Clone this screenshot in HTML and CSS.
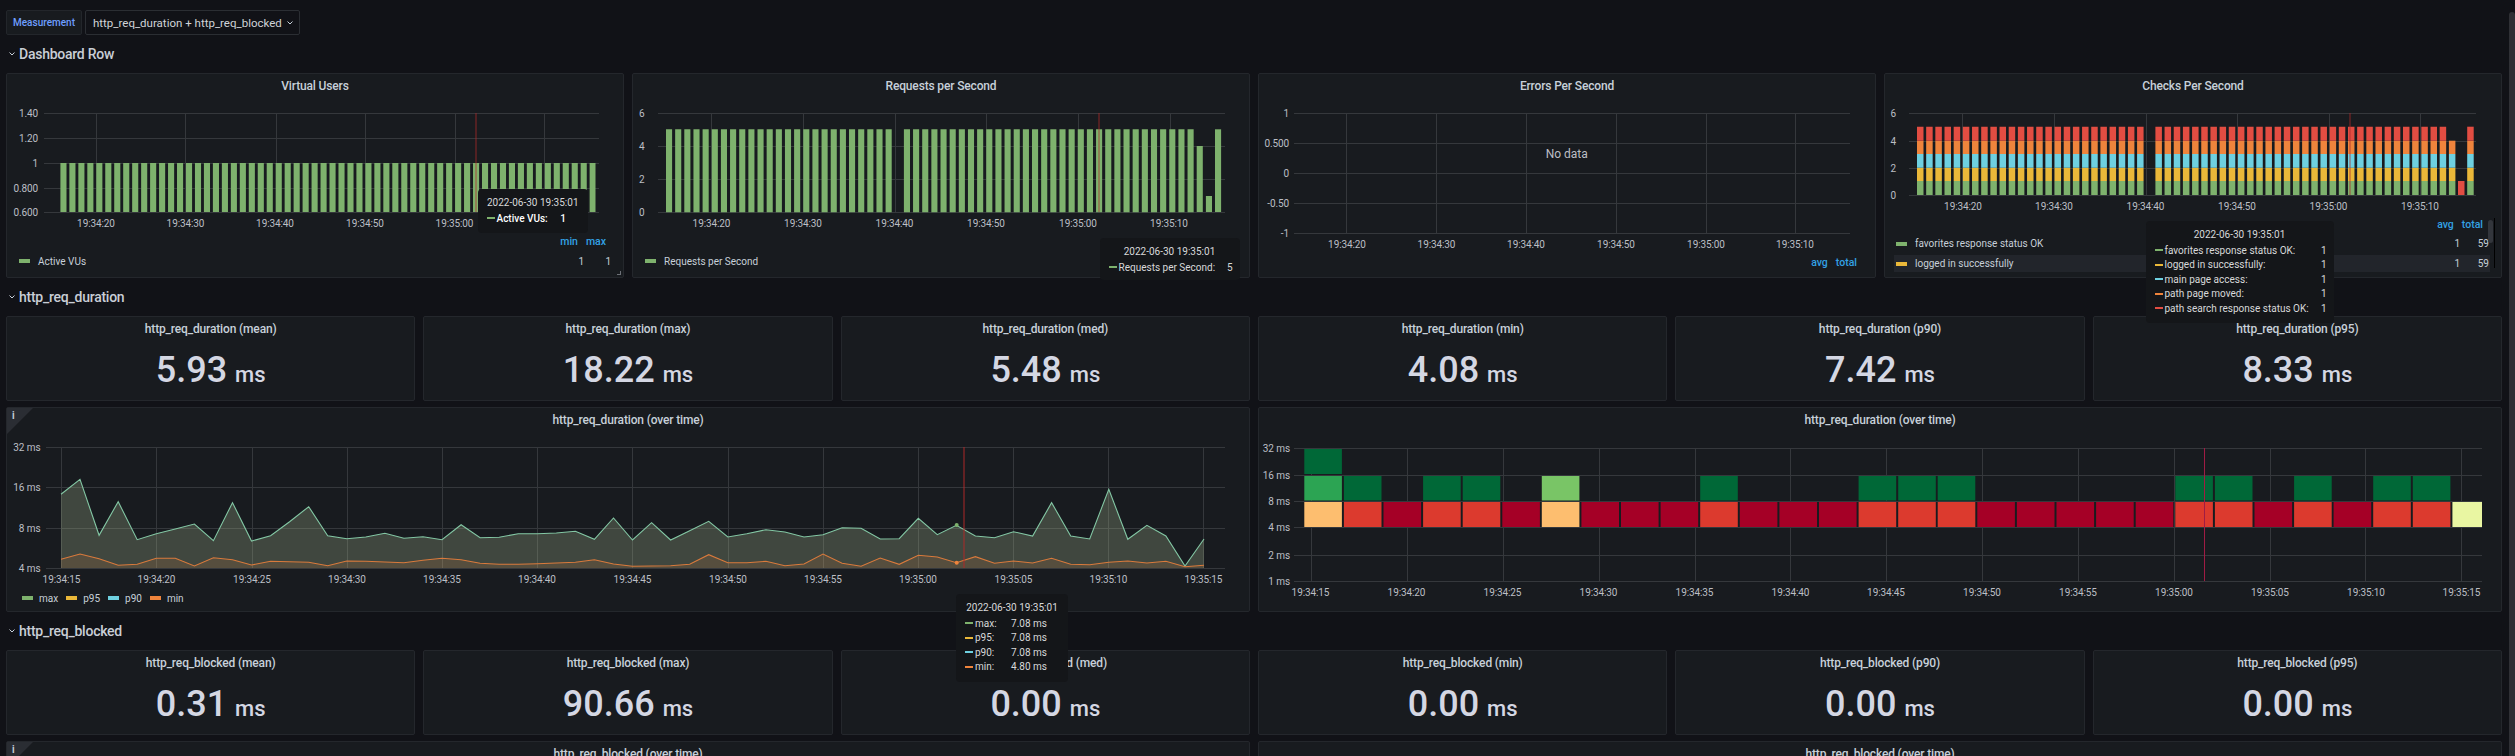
FILE: index.html
```html
<!DOCTYPE html>
<html lang="en">
<head>
<meta charset="utf-8">
<title>k6 dashboard</title>
<link rel="stylesheet" href="styles.css">
</head>
<body>
<div class="scrollbar"></div>
<main class="page">
  <div class="toolbar">
    <span class="var-label">Measurement</span>
    <span class="var-value">http_req_duration + http_req_blocked
      <svg class="chev" viewBox="0 0 8 8"><path d="M1.5 2.5 4 5l2.500-2.500"/></svg>
    </span>
  </div>

  <h2 class="row-title"><svg class="chev" viewBox="0 0 8 8"><path d="M1.500 2.500 4 5l2.500-2.500"/></svg>Dashboard Row</h2>
  <section class="grid four">
    <article class="panel handle">
      <h3 class="p-title">Virtual Users</h3>
      <svg class="chart h132" viewBox="7 100 616 132">
        <path class="grid-l" d="M44 113.500H599M44 138.500H599M44 163.500H599M44 188.500H599M44 212.500H599M96.500 113V212M185.500 113V212M276.500 113V212M365.500 113V212M455.500 113V212M544.500 113V212"/>
        <line class="bars" x1="60.400" x2="595.500" y1="187.500" y2="187.500" stroke-width="49" stroke-dasharray="6.100 2.870"/>
        <line class="cursor" x1="476" x2="476" y1="113" y2="212"/>
        <g class="ay"><text x="38" y="113">1.40</text><text x="38" y="138">1.20</text><text x="38" y="163">1</text><text x="38" y="188">0.800</text><text x="38" y="212">0.600</text></g>
        <g class="ax"><text x="96" y="223">19:34:20</text><text x="185.500" y="223">19:34:30</text><text x="275" y="223">19:34:40</text><text x="365" y="223">19:34:50</text><text x="454.500" y="223">19:35:00</text></g>
      </svg>
      <div class="legend l45">
        <div class="lg-head"><span>min</span><span>max</span></div>
        <div class="lg-row"><i class="sw green"></i><span class="lg-name">Active VUs</span><span class="lg-val">1</span><span class="lg-val">1</span></div>
      </div>
      <div class="tip t1">
        <div class="tip-date">2022-06-30 19:35:01</div>
        <div class="tip-row strong"><i class="tsw green"></i><span>Active VUs:</span><b>1</b></div>
      </div>
    </article>

    <article class="panel">
      <h3 class="p-title">Requests per Second</h3>
      <svg class="chart h132" viewBox="633 100 616 132">
        <path class="grid-l" d="M658 113.500H1225M658 146.500H1225M658 179.500H1225M658 212.500H1225M711.500 113V212M803.500 113V212M895.500 113V212M986.500 113V212M1078.500 113V212M1170.500 113V212"/>
        <g class="bars dash915" stroke-width="83">
          <line x1="666" x2="891.700" y1="170.800" y2="170.800"/>
          <line x1="903.900" x2="1193.700" y1="170.800" y2="170.800"/>
        </g>
        <rect class="bar-fill" x="1196.700" y="146" width="6.100" height="66"/>
        <rect class="bar-fill" x="1205.900" y="196" width="6.100" height="16"/>
        <rect class="bar-fill" x="1215" y="129.300" width="6.100" height="82.700"/>
        <line class="cursor" x1="1099" x2="1099" y1="113" y2="212"/>
        <g class="ay"><text x="644.500" y="113">6</text><text x="644.500" y="146">4</text><text x="644.500" y="179">2</text><text x="644.500" y="212">0</text></g>
        <g class="ax"><text x="711.500" y="223">19:34:20</text><text x="803" y="223">19:34:30</text><text x="894.500" y="223">19:34:40</text><text x="986" y="223">19:34:50</text><text x="1078" y="223">19:35:00</text><text x="1169" y="223">19:35:10</text></g>
      </svg>
      <div class="legend l45">
        <div class="lg-row"><i class="sw green"></i><span class="lg-name">Requests per Second</span></div>
      </div>
      <div class="tip t2">
        <div class="tip-date">2022-06-30 19:35:01</div>
        <div class="tip-row"><i class="tsw green"></i><span>Requests per Second:</span><b>5</b></div>
      </div>
    </article>

    <article class="panel">
      <h3 class="p-title">Errors Per Second</h3>
      <svg class="chart h152" viewBox="1259 100 616 152">
        <path class="grid-l" d="M1294 113.500H1850M1294 143.500H1850M1294 173.500H1850M1294 203.500H1850M1294 233.500H1850M1346.500 113V233M1436.500 113V233M1526.500 113V233M1616.500 113V233M1706.500 113V233M1795.500 113V233"/>
        <text class="nodata" x="1566.700" y="154">No data</text>
        <g class="ay"><text x="1289" y="113">1</text><text x="1289" y="143">0.500</text><text x="1289" y="173">0</text><text x="1289" y="203">-0.50</text><text x="1289" y="233">-1</text></g>
        <g class="ax"><text x="1347" y="244">19:34:20</text><text x="1436.500" y="244">19:34:30</text><text x="1526" y="244">19:34:40</text><text x="1616" y="244">19:34:50</text><text x="1706" y="244">19:35:00</text><text x="1795" y="244">19:35:10</text></g>
      </svg>
      <div class="legend l25">
        <div class="lg-head wide"><span>avg</span><span>total</span></div>
      </div>
    </article>

    <article class="panel">
      <h3 class="p-title">Checks Per Second</h3>
      <svg class="chart h115" viewBox="1885 100 616 115">
        <path class="grid-l" d="M1909 113.500H2476M1909 141.500H2476M1909 168.500H2476M1909 195.500H2476M1962.500 113V195M2054.500 113V195M2146.500 113V195M2237.500 113V195M2329.500 113V195M2420.500 113V195"/>
        <g class="dash917" stroke-width="14">
          <g class="s-green"><line x1="1917" x2="2143.600" y1="188" y2="188"/><line x1="2155.400" x2="2446.200" y1="188" y2="188"/></g>
          <g class="s-yellow" stroke-width="13.300"><line x1="1917" x2="2143.600" y1="174.300" y2="174.300"/><line x1="2155.400" x2="2446.200" y1="174.300" y2="174.300"/></g>
          <g class="s-blue" stroke-width="13.700"><line x1="1917" x2="2143.600" y1="160.800" y2="160.800"/><line x1="2155.400" x2="2446.200" y1="160.800" y2="160.800"/></g>
          <g class="s-orange" stroke-width="13.300"><line x1="1917" x2="2143.600" y1="147.300" y2="147.300"/><line x1="2155.400" x2="2446.200" y1="147.300" y2="147.300"/></g>
          <g class="s-red"><line x1="1917" x2="2143.600" y1="133.700" y2="133.700"/><line x1="2155.400" x2="2446.200" y1="133.700" y2="133.700"/></g>
        </g>
        <rect class="f-green" x="2448.900" y="181" width="6.500" height="14"/>
        <rect class="f-yellow" x="2448.900" y="167.700" width="6.500" height="13.300"/>
        <rect class="f-blue" x="2448.900" y="154" width="6.500" height="13.700"/>
        <rect class="f-orange" x="2448.900" y="140.700" width="6.500" height="13.300"/>
        <rect class="f-red" x="2458" y="181" width="6.500" height="14"/>
        <rect class="f-green" x="2467.200" y="181" width="6.500" height="14"/>
        <rect class="f-yellow" x="2467.200" y="167.700" width="6.500" height="13.300"/>
        <rect class="f-blue" x="2467.200" y="154" width="6.500" height="13.700"/>
        <rect class="f-orange" x="2467.200" y="140.700" width="6.500" height="13.300"/>
        <rect class="f-red" x="2467.200" y="126.700" width="6.500" height="14"/>
        <line class="cursor" x1="2350" x2="2350" y1="113" y2="195"/>
        <g class="ay"><text x="1896" y="113">6</text><text x="1896" y="141">4</text><text x="1896" y="168">2</text><text x="1896" y="195">0</text></g>
        <g class="ax"><text x="1963" y="206">19:34:20</text><text x="2054" y="206">19:34:30</text><text x="2145.500" y="206">19:34:40</text><text x="2237" y="206">19:34:50</text><text x="2328.500" y="206">19:35:00</text><text x="2420" y="206">19:35:10</text></g>
      </svg>
      <div class="legend-table">
        <div class="lg-head table"><span>avg</span><span>total</span></div>
        <div class="lg-row t-row"><i class="sw green"></i><span class="lg-name">favorites response status OK</span><span class="lg-val">1</span><span class="lg-val w29">59</span></div>
        <div class="lg-row t-row hl"><i class="sw yellow"></i><span class="lg-name">logged in successfully</span><span class="lg-val">1</span><span class="lg-val w29">59</span></div>
        <div class="lg-track"></div>
        <div class="lg-thumb"></div>
      </div>
      <div class="tip t4">
        <div class="tip-date">2022-06-30 19:35:01</div>
        <div class="tip-row"><i class="tsw green"></i><span>favorites response status OK:</span><b>1</b></div>
        <div class="tip-row"><i class="tsw yellow"></i><span>logged in successfully:</span><b>1</b></div>
        <div class="tip-row"><i class="tsw blue"></i><span>main page access:</span><b>1</b></div>
        <div class="tip-row"><i class="tsw orange"></i><span>path page moved:</span><b>1</b></div>
        <div class="tip-row"><i class="tsw red"></i><span>path search response status OK:</span><b>1</b></div>
      </div>
    </article>
  </section>

  <h2 class="row-title"><svg class="chev" viewBox="0 0 8 8"><path d="M1.500 2.500 4 5l2.500-2.500"/></svg>http_req_duration</h2>
  <section class="grid six">
    <article class="stat"><h3 class="p-title">http_req_duration (mean)</h3><div class="value">5.93<small>ms</small></div></article>
    <article class="stat"><h3 class="p-title">http_req_duration (max)</h3><div class="value">18.22<small>ms</small></div></article>
    <article class="stat"><h3 class="p-title">http_req_duration (med)</h3><div class="value">5.48<small>ms</small></div></article>
    <article class="stat"><h3 class="p-title">http_req_duration (min)</h3><div class="value">4.08<small>ms</small></div></article>
    <article class="stat"><h3 class="p-title">http_req_duration (p90)</h3><div class="value">7.42<small>ms</small></div></article>
    <article class="stat"><h3 class="p-title">http_req_duration (p95)</h3><div class="value">8.33<small>ms</small></div></article>
  </section>
  <section class="grid two">
    <article class="panel">
      <span class="info"></span><span class="info-i">i</span>
      <h3 class="p-title">http_req_duration (over time)</h3>
      <svg class="chart h155" viewBox="7 434 1242 155">
        <path class="grid-l" d="M46 447.500H1225M46 487.500H1225M46 528.500H1225M46 568.500H1225M61.500 447V568M156.500 447V568M252.500 447V568M347.500 447V568M442.500 447V568M537.500 447V568M632.500 447V568M728.500 447V568M823.500 447V568M918.500 447V568M1013.500 447V568M1108.500 447V568M1203.500 447V568"/>
        <polygon class="area-max" points="61,568 61,494.300 80,479.300 99.100,535.300 118.200,501.700 137.200,539.700 156.300,533.700 175.300,529 194.400,524 213.400,540.700 232.500,502.700 251.500,541 270.600,535.700 289.600,521.700 308.700,506.700 327.700,535.700 346.800,538.700 365.800,537 384.900,533.300 403.900,538.300 423,536.700 442,539.700 461.100,524.700 480.100,537.700 499.200,537.300 518.200,533.700 537.300,533.700 556.300,533 575.400,531.300 594.400,539.300 613.500,518 632.500,540 651.600,522.700 670.600,540 689.700,530.700 708.700,521.300 727.800,537 746.800,533.700 765.900,529.700 784.900,532 804,537 823,534.700 842.100,527.700 861.100,528.300 880.200,539 899.200,538.700 918.300,518.300 937.300,534.700 956.400,525.300 975.400,536 994.500,537.700 1013.500,531.700 1032.600,536 1051.600,502.700 1070.700,536 1089.700,539 1108.800,489.300 1127.800,539.300 1146.900,525.300 1165.900,536 1185,566 1204,539 1204,568"/>
        <polygon class="area-min" points="61,568 61,559.300 80,554 99.100,558.700 118.200,565.300 137.200,564.300 156.300,558.300 175.300,558.300 194.400,566 213.400,557.700 232.500,559.700 251.500,565 270.600,561.300 289.600,561.700 308.700,562.300 327.700,565.700 346.800,561 365.800,561.300 384.900,562 403.900,562.700 423,560.300 442,558.300 461.100,559.700 480.100,563.300 499.200,564.300 518.200,564.300 537.300,563.700 556.300,563 575.400,562.300 594.400,559.700 613.500,564 632.500,566.300 651.600,566 670.600,565.700 689.700,564.300 708.700,554.700 727.800,562.700 746.800,562.700 765.900,561.300 784.900,565.700 804,564 823,554 842.100,563.300 861.100,566.300 880.200,558 899.200,564.300 918.300,555.300 937.300,557 956.400,562.700 975.400,556.700 994.500,563.300 1013.500,561 1032.600,563 1051.600,558.300 1070.700,564.300 1089.700,564.700 1108.800,562.300 1127.800,561 1146.900,563 1165.900,561.300 1185,566.700 1204,565.300 1204,568"/>
        <polyline class="line-max" points="61,494.300 80,479.300 99.100,535.300 118.200,501.700 137.200,539.700 156.300,533.700 175.300,529 194.400,524 213.400,540.700 232.500,502.700 251.500,541 270.600,535.700 289.600,521.700 308.700,506.700 327.700,535.700 346.800,538.700 365.800,537 384.900,533.300 403.900,538.300 423,536.700 442,539.700 461.100,524.700 480.100,537.700 499.200,537.300 518.200,533.700 537.300,533.700 556.300,533 575.400,531.300 594.400,539.300 613.500,518 632.500,540 651.600,522.700 670.600,540 689.700,530.700 708.700,521.300 727.800,537 746.800,533.700 765.900,529.700 784.900,532 804,537 823,534.700 842.100,527.700 861.100,528.300 880.200,539 899.200,538.700 918.300,518.300 937.300,534.700 956.400,525.300 975.400,536 994.500,537.700 1013.500,531.700 1032.600,536 1051.600,502.700 1070.700,536 1089.700,539 1108.800,489.300 1127.800,539.300 1146.900,525.300 1165.900,536 1185,566 1204,539"/>
        <polyline class="line-min" points="61,559.300 80,554 99.100,558.700 118.200,565.300 137.200,564.300 156.300,558.300 175.300,558.300 194.400,566 213.400,557.700 232.500,559.700 251.500,565 270.600,561.300 289.600,561.700 308.700,562.300 327.700,565.700 346.800,561 365.800,561.300 384.900,562 403.900,562.700 423,560.300 442,558.300 461.100,559.700 480.100,563.300 499.200,564.300 518.200,564.300 537.300,563.700 556.300,563 575.400,562.300 594.400,559.700 613.500,564 632.500,566.300 651.600,566 670.600,565.700 689.700,564.300 708.700,554.700 727.800,562.700 746.800,562.700 765.900,561.300 784.900,565.700 804,564 823,554 842.100,563.300 861.100,566.300 880.200,558 899.200,564.300 918.300,555.300 937.300,557 956.400,562.700 975.400,556.700 994.500,563.300 1013.500,561 1032.600,563 1051.600,558.300 1070.700,564.300 1089.700,564.700 1108.800,562.300 1127.800,561 1146.900,563 1165.900,561.300 1185,566.700 1204,565.300"/>
        <circle class="dot-max" cx="956.700" cy="525" r="2"/>
        <circle class="dot-min" cx="956.700" cy="562.700" r="2"/>
        <line class="cursor wide-c" x1="964" x2="964" y1="447" y2="568"/>
        <g class="ay"><text x="40.500" y="447">32 ms</text><text x="40.500" y="487">16 ms</text><text x="40.500" y="528">8 ms</text><text x="40.500" y="568">4 ms</text></g>
        <g class="ax"><text x="61.500" y="579">19:34:15</text><text x="156.500" y="579">19:34:20</text><text x="252" y="579">19:34:25</text><text x="347" y="579">19:34:30</text><text x="442" y="579">19:34:35</text><text x="537" y="579">19:34:40</text><text x="632.500" y="579">19:34:45</text><text x="728" y="579">19:34:50</text><text x="823" y="579">19:34:55</text><text x="918" y="579">19:35:00</text><text x="1013.500" y="579">19:35:05</text><text x="1108.500" y="579">19:35:10</text><text x="1203.500" y="579">19:35:15</text></g>
      </svg>
      <div class="legend-inline">
        <span class="li"><i class="sw green"></i>max</span>
        <span class="li"><i class="sw yellow"></i>p95</span>
        <span class="li"><i class="sw blue"></i>p90</span>
        <span class="li"><i class="sw orange"></i>min</span>
      </div>
      <div class="tip t3">
        <div class="tip-date">2022-06-30 19:35:01</div>
        <div class="tip-row"><i class="tsw green"></i><span>max:</span><b>7.08 ms</b></div>
        <div class="tip-row"><i class="tsw yellow"></i><span>p95:</span><b>7.08 ms</b></div>
        <div class="tip-row"><i class="tsw blue"></i><span>p90:</span><b>7.08 ms</b></div>
        <div class="tip-row"><i class="tsw orange"></i><span>min:</span><b>4.80 ms</b></div>
      </div>
    </article>
    <article class="panel">
      <h3 class="p-title">http_req_duration (over time)</h3>
      <svg class="chart h177" viewBox="1259 434 1242 177">
        <path class="grid-h" d="M1294 448.500H2482M1294 475.500H2482M1294 501.500H2482M1294 527.500H2482M1294 555.500H2482M1294 581.500H2482M1311.500 448V581M1407.500 448V581M1503.500 448V581M1599.500 448V581M1695.500 448V581M1790.500 448V581M1886.500 448V581M1982.500 448V581M2078.500 448V581M2174.500 448V581M2270.500 448V581M2365.500 448V581M2461.500 448V581"/>
        <path class="hm-dark-green" d="M1304.300 449h37.600v25h-37.600zM1343.900 476h37.600v24.500h-37.600zM1423.100 476h37.600v24.500h-37.600zM1462.700 476h37.600v24.500h-37.600zM1700.200 476h37.600v24.500h-37.600zM1858.600 476h37.600v24.500h-37.600zM1898.200 476h37.600v24.500h-37.600zM1937.700 476h37.600v24.500h-37.600zM2175.300 476h37.600v24.500h-37.600zM2214.900 476h37.600v24.500h-37.600zM2294.100 476h37.600v24.500h-37.600zM2373.200 476h37.600v24.500h-37.600zM2412.800 476h37.600v24.500h-37.600z"/>
        <path class="hm-mid-green" d="M1304.300 476h37.600v24.500h-37.600z"/>
        <path class="hm-light-green" d="M1541.800 476h37.600v24.500h-37.600z"/>
        <path class="hm-red" d="M1343.900 502h37.600v25h-37.600zM1423.100 502h37.600v25h-37.600zM1462.700 502h37.600v25h-37.600zM1700.200 502h37.600v25h-37.600zM1858.600 502h37.600v25h-37.600zM1898.200 502h37.600v25h-37.600zM1937.700 502h37.600v25h-37.600zM2175.300 502h37.600v25h-37.600zM2214.900 502h37.600v25h-37.600zM2294.100 502h37.600v25h-37.600zM2373.200 502h37.600v25h-37.600zM2412.800 502h37.600v25h-37.600z"/>
        <path class="hm-dark-red" d="M1383.500 502h37.600v25h-37.600zM1502.300 502h37.600v25h-37.600zM1581.400 502h37.600v25h-37.600zM1621 502h37.600v25h-37.600zM1660.600 502h37.600v25h-37.600zM1739.800 502h37.600v25h-37.600zM1779.400 502h37.600v25h-37.600zM1819 502h37.600v25h-37.600zM1977.300 502h37.600v25h-37.600zM2016.900 502h37.600v25h-37.600zM2056.500 502h37.600v25h-37.600zM2096.100 502h37.600v25h-37.600zM2135.700 502h37.600v25h-37.600zM2254.500 502h37.600v25h-37.600zM2333.600 502h37.600v25h-37.600z"/>
        <path class="hm-apricot" d="M1304.300 502h37.600v25h-37.600zM1541.800 502h37.600v25h-37.600z"/>
        <path class="hm-lime" d="M2452.400 502h29.600v25h-29.600z"/>
        <line class="cursor thin" x1="2204.500" x2="2204.500" y1="448" y2="581"/>
        <g class="ay"><text x="1290" y="448">32 ms</text><text x="1290" y="475">16 ms</text><text x="1290" y="501">8 ms</text><text x="1290" y="527">4 ms</text><text x="1290" y="555">2 ms</text><text x="1290" y="581">1 ms</text></g>
        <g class="ax"><text x="1310.500" y="592">19:34:15</text><text x="1406.500" y="592">19:34:20</text><text x="1502.500" y="592">19:34:25</text><text x="1598.500" y="592">19:34:30</text><text x="1694.500" y="592">19:34:35</text><text x="1790.500" y="592">19:34:40</text><text x="1886" y="592">19:34:45</text><text x="1982" y="592">19:34:50</text><text x="2078" y="592">19:34:55</text><text x="2174" y="592">19:35:00</text><text x="2270" y="592">19:35:05</text><text x="2366" y="592">19:35:10</text><text x="2461.500" y="592">19:35:15</text></g>
      </svg>
    </article>
  </section>

  <h2 class="row-title"><svg class="chev" viewBox="0 0 8 8"><path d="M1.500 2.500 4 5l2.500-2.500"/></svg>http_req_blocked</h2>
  <section class="grid six">
    <article class="stat"><h3 class="p-title">http_req_blocked (mean)</h3><div class="value">0.31<small>ms</small></div></article>
    <article class="stat"><h3 class="p-title">http_req_blocked (max)</h3><div class="value">90.66<small>ms</small></div></article>
    <article class="stat"><h3 class="p-title">http_req_blocked (med)</h3><div class="value">0.00<small>ms</small></div></article>
    <article class="stat"><h3 class="p-title">http_req_blocked (min)</h3><div class="value">0.00<small>ms</small></div></article>
    <article class="stat"><h3 class="p-title">http_req_blocked (p90)</h3><div class="value">0.00<small>ms</small></div></article>
    <article class="stat"><h3 class="p-title">http_req_blocked (p95)</h3><div class="value">0.00<small>ms</small></div></article>
  </section>
  <section class="grid two">
    <article class="panel"><span class="info"></span><span class="info-i">i</span><h3 class="p-title">http_req_blocked (over time)</h3></article>
    <article class="panel"><h3 class="p-title">http_req_blocked (over time)</h3></article>
  </section>
</main>
</body>
</html>
```
FILE: styles.css
```css
html, body { margin: 0; height: 756px; overflow: hidden; background: #111217; }
body { font-family: Roboto, "Liberation Sans", sans-serif; color: #c7d0d9; font-size: 10px; }
.page { padding: 10px 13px 0 6px; }
.scrollbar { position: absolute; right: 0; top: 12px; width: 6px; height: 744px; background: #2f3035; border-radius: 3px 3px 0 0; }

.toolbar { display: flex; gap: 3px; height: 25px; }
.var-label, .var-value { display: flex; align-items: center; border: 1px solid #23262b; background: #181b1f; border-radius: 2px; box-sizing: border-box; white-space: nowrap; }
.var-label { width: 76px; justify-content: center; color: #6e9fff; font-weight: 500; font-size: 10px; }
.var-value { width: 215px; padding-left: 7px; gap: 4px; background: #111217; border-color: #2b2e33; color: #d0d3d8; font-size: 11.500px; }
.chev { width: 8px; height: 8px; flex: none; fill: none; stroke: #c7d0d9; stroke-width: 1; }

.row-title { display: flex; align-items: center; gap: 3px; height: 38px; margin: 0; padding-left: 2px; box-sizing: border-box; font-size: 14px; font-weight: 500; color: #c9ced6; letter-spacing: -.25px; }

.grid { display: grid; gap: 8px; }
.four { grid-template-columns: repeat(4, 1fr); }
.six { grid-template-columns: repeat(6, 1fr); margin-bottom: 6px; }
.two { grid-template-columns: repeat(2, 1fr); }

.panel, .stat { position: relative; box-sizing: border-box; background: #181b1f; border: 1px solid #24272c; border-radius: 2px; }
.panel { height: 205px; display: flex; flex-direction: column; }
.stat { height: 85px; }
.handle::after { content: ""; position: absolute; right: 2px; bottom: 2px; width: 3px; height: 3px; border-right: 1px solid #6d7077; border-bottom: 1px solid #6d7077; }

.p-title { margin: 0; height: 26px; line-height: 24px; text-align: center; font-size: 12px; font-weight: 500; color: #c7d0d9; letter-spacing: -.15px; flex: none; }
.stat .p-title { height: 24px; }
.value { display: flex; justify-content: center; align-items: baseline; height: 59px; line-height: 59px; font-size: 36px; font-weight: 500; color: #d4d7e3; }
.value small { font-size: 22px; margin-left: 8px; font-weight: 500; }

.chart { display: block; width: 100%; flex: none; }
.h132 { height: 132px; }
.h152 { height: 152px; }
.h115 { height: 115px; }
.h155 { height: 155px; }
.h177 { height: 177px; }

.grid-l, .grid-h { fill: none; stroke: #35383c; stroke-width: 1; }
.bars, .bars line { stroke: #7eb26d; }
.bar-fill { stroke: none; fill: #7eb26d; }
.dash915 line { stroke-dasharray: 6.100 3.050; }
.dash917 line { stroke-dasharray: 6.500 2.670; }
.s-green line { stroke: #7eb26d; }
.s-yellow line { stroke: #eab839; }
.s-blue line { stroke: #6ed0e0; }
.s-orange line { stroke: #ef843c; }
.s-red line { stroke: #e24d42; }
.f-green { fill: #7eb26d; }
.f-yellow { fill: #eab839; }
.f-blue { fill: #6ed0e0; }
.f-orange { fill: #ef843c; }
.f-red { fill: #e24d42; }
.cursor { stroke: #b02a2a; stroke-width: 1; opacity: .75; }
.wide-c { stroke-width: 1.500; opacity: .65; }
.thin { stroke: #a01c44; opacity: 1; }
.ay text, .ax text, .nodata { font-family: Roboto, "Liberation Sans", sans-serif; font-size: 10px; fill: #bcbfc5; dominant-baseline: central; letter-spacing: -.1px; }
.ay text { text-anchor: end; }
.ax text { text-anchor: middle; }
.nodata { font-size: 12px; text-anchor: middle; letter-spacing: 0; }

.area-max { fill: #9fb08a; fill-opacity: .3; stroke: none; }
.area-min { fill: #ef843c; fill-opacity: .13; stroke: none; }
.line-max { fill: none; stroke: #83c7a4; stroke-width: 1.100; }
.line-min { fill: none; stroke: #d97a3c; stroke-width: 1.100; }
.dot-max { fill: #7eb26d; }
.dot-min { fill: #ef843c; }

.hm-dark-green { fill: #006837; }
.hm-mid-green { fill: #2ca453; }
.hm-light-green { fill: #79c566; }
.hm-red { fill: #dc3a2e; }
.hm-dark-red { fill: #a50026; }
.hm-apricot { fill: #fdbe6f; }
.hm-lime { fill: #e9f6a2; }

.legend { display: flex; flex-direction: column; justify-content: flex-end; box-sizing: border-box; padding-bottom: 7px; }
.l45 { height: 45px; }
.l25 { height: 25px; padding-bottom: 4px; }
.lg-head { display: flex; justify-content: flex-end; gap: 8px; height: 20px; line-height: 20px; padding-right: 17px; color: #33a2e5; font-size: 10.500px; font-weight: 500; }
.lg-head.wide { padding-right: 18px; }
.lg-row { display: flex; align-items: center; height: 18px; padding-left: 12px; padding-right: 12px; font-size: 10px; color: #c7d0d9; }
.lg-name { flex: 1; margin-left: 8px; }
.lg-val { width: 27px; text-align: right; }
.sw { display: inline-block; flex: none; width: 11px; height: 4px; }
.green { background: #7eb26d; }
.yellow { background: #eab839; }
.blue { background: #6ed0e0; }
.orange { background: #ef843c; }
.red { background: #e24d42; }

.legend-table { position: relative; flex: 1; margin-left: 9px; margin-right: 11px; }
.lg-head.table { padding-right: 7px; }
.t-row { height: 17px; padding-left: 2px; padding-right: 1px; margin-bottom: 3px; }
.hl { background: #22252b; }
.w29 { width: 29px; }
.lg-track { position: absolute; right: -5px; top: 3px; width: 1px; height: 50px; background: #000; }
.lg-thumb { position: absolute; right: -3px; top: 5px; width: 5px; height: 23px; border-radius: 3px; background: #33363c; }

.legend-inline { display: flex; gap: 8px; height: 18px; align-items: center; padding-left: 15px; font-size: 10px; }
.li { display: flex; align-items: center; gap: 6px; }

.info { position: absolute; left: 0; top: 0; width: 0; height: 0; border-top: 26px solid #2a2d33; border-right: 26px solid transparent; }
.info-i { position: absolute; left: 5px; top: 2px; font-size: 10px; font-weight: 700; color: #c7d0d9; line-height: 12px; }

.tip { position: absolute; z-index: 5; box-sizing: border-box; padding-top: 6px; background: #141619; border-radius: 4px; font-size: 10px; color: #d8d9da; white-space: nowrap; }
.tip-date { height: 16px; line-height: 16px; text-align: center; }
.tip-row { display: grid; grid-template-columns: 8px 1fr auto; align-items: center; column-gap: 2px; height: 14.500px; padding: 0 7px 0 9px; }
.tip-row b { font-weight: 400; }
.tsw { display: block; height: 2px; width: 8px; }
.strong span, .strong b { font-weight: 500; color: #fff; }
.t1 { left: 470.500px; top: 115px; width: 110.500px; height: 44px; }
.t1 .tip-row { padding-right: 22px; }
.t2 { left: 466.500px; top: 164px; width: 140px; height: 42px; }
.t3 { left: 949px; top: 186px; width: 112px; height: 88px; }
.t3 .tip-row { padding-right: 21px; }
.t4 { left: 260.500px; top: 147px; width: 188px; height: 102px; }
```
